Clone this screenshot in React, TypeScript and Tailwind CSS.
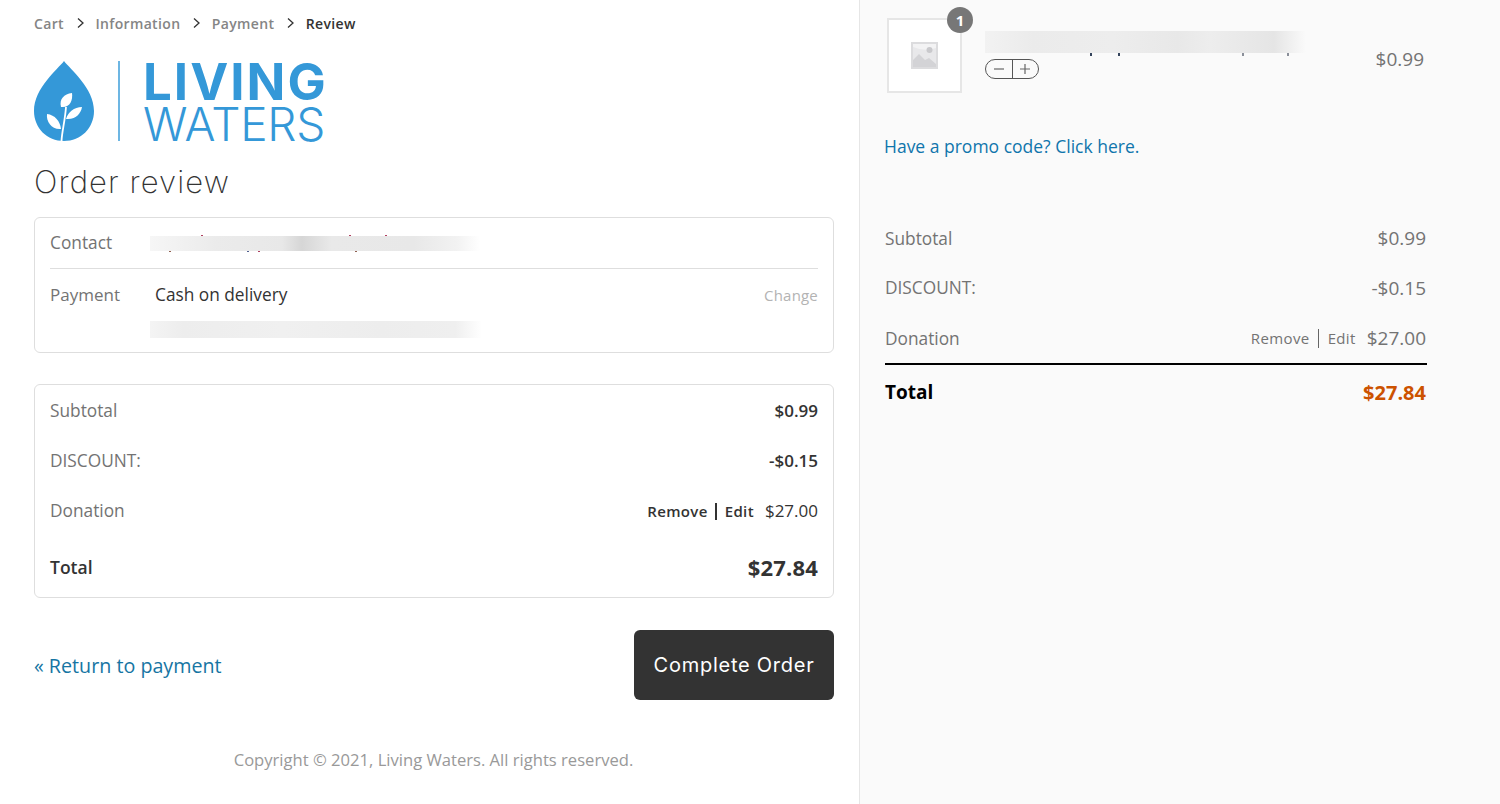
import React from "react";

const sans = "font-['Open_Sans',sans-serif]";

function Chevron() {
  return (
    <svg width="9" height="12" viewBox="0 0 9 12" fill="none" stroke="#333" strokeWidth="1.3" className="ml-[12px] mr-[10.4px]">
      <path d="M2 1.5 L7 6 L2 10.5" />
    </svg>
  );
}

function Logo() {
  return (
    <div className="flex items-stretch h-[80px] mt-[28px]">
      <svg width="61" height="80" viewBox="0 0 61 80">
        <path d="M30 0 C24 8 0 27 0 50 C0 67 13 80 30 80 C47 80 60 67 60 50 C60 27 36 8 30 0Z" fill="#3498d8" />
        <path d="M27.5 80 C28 70 31 60 32 46" stroke="#fff" strokeWidth="1.8" fill="none" />
        <path d="M27 46 C25 38 30 33 38 32 C39 39 36 46 29 46Z" fill="#fff" />
        <path d="M32 58 C34 51 40 46 48 46 C47 52 42 59 32 58Z" fill="#fff" />
        <path d="M27 68 C26 60 21 54 13 53 C12 61 18 69 27 68Z" fill="#fff" />
      </svg>
      <div className="w-[2px] bg-[#6db6e3] ml-[23px] mr-[23px]" />
      <div className="flex flex-col justify-between pt-[2px] font-['Inter',sans-serif] text-[#3498d8]">
        <span className="text-[51px] font-bold h-[37px] leading-[37px] tracking-[2px]">LIVING</span>
        <span className="text-[46px] font-light h-[33px] leading-[33px] tracking-[-0.3px]">WATERS</span>
      </div>
    </div>
  );
}

function Ticks({ items, tall }: { items: [number, number, string][]; tall?: boolean }) {
  return (
    <>
      {items.map(([x, y, c], i) => (
        <span key={i} className={tall ? "absolute w-[2px] h-[3px]" : "absolute w-[2px] h-[1px]"} style={{ left: x, top: y, backgroundColor: c }} />
      ))}
    </>
  );
}

function SummaryRow({ label, value, h }: { label: string; value: React.ReactNode; h: string }) {
  return (
    <div className={`flex items-center justify-between ${h}`}>
      <span className="text-[17.3px] text-[#737373]">{label}</span>
      <span className="text-[17px] text-[#333] font-semibold">{value}</span>
    </div>
  );
}

export default function App() {
  return (
    <div className={`flex min-h-[804px] h-[804px] overflow-hidden bg-white ${sans}`}>
      {/* Left */}
      <main className="w-[860px] shrink-0 border-r border-[#e6e6e6] pl-[34px] pr-[25px] pt-[13px]">
        <nav className="flex items-center h-[20px] text-[14px] font-semibold tracking-[0.35px] text-[#858585]">
          <span>Cart</span>
          <Chevron />
          <span>Information</span>
          <Chevron />
          <span>Payment</span>
          <Chevron />
          <span className="text-[#333]">Review</span>
        </nav>

        <Logo />

        <h1 className="font-['Inter',sans-serif] font-extralight text-[31px] leading-[40px] tracking-[1.1px] text-[#333] mt-[21px]">Order review</h1>

        <section className="mt-[15px] h-[136px] border border-[#dedede] rounded-[6px] px-[15px]">
          <div className="flex items-center h-[51px] border-b border-[#dedede]">
            <span className="w-[100px] text-[17.3px] text-[#737373]">Contact</span>
            <div className="relative w-[330px] h-[15px] bg-[linear-gradient(90deg,#f6f6f6_0%,#ebebeb_20%,#e8e8e8_40%,#d6d6d6_46%,#e9e9e9_55%,#e8e8e8_80%,#f2f2f2_93%,#ffffff_100%)]">
              <Ticks
                items={[
                  [51, -1, "#b04060"],
                  [199, -1, "#b04060"],
                  [235, -1, "#b04060"],
                  [19, 15, "#906050"],
                  [97, 15, "#506090"],
                  [108, 15, "#b04060"],
                  [205, 15, "#906050"],
                ]}
              />
            </div>
          </div>
          <div className="flex items-center h-[51px]">
            <span className="w-[105px] text-[17px] text-[#737373]">Payment</span>
            <span className="text-[17.3px] text-[#333] grow">Cash on delivery</span>
            <span className="text-[15px] text-[#b3b3b3] tracking-[0.2px] mt-[2px]">Change</span>
          </div>
          <div className="mt-[1px] ml-[100px] w-[332px] h-[17px] bg-[linear-gradient(90deg,#f4f4f4_0%,#ededed_10%,#f0f0f0_40%,#ededed_70%,#efefef_92%,#ffffff_100%)]" />
        </section>

        <section className="mt-[31px] h-[214px] border border-[#dedede] rounded-[6px] px-[15px] pt-[1px]">
          <SummaryRow h="h-[50px]" label="Subtotal" value="$0.99" />
          <SummaryRow h="h-[50px]" label="DISCOUNT:" value="-$0.15" />
          <SummaryRow
            h="h-[50px]"
            label="Donation"
            value={
              <span className="flex items-center">
                <span className="text-[15px] tracking-[0.35px]">Remove</span>
                <span className="w-[2px] h-[17px] bg-[#333] ml-[7px] mr-[8px]" />
                <span className="text-[15px] tracking-[0.35px] mr-[11px]">Edit</span>
                <span className="font-normal">$27.00</span>
              </span>
            }
          />
          <div className="flex items-center justify-between h-[62px] text-[#333]">
            <span className="text-[17.5px] font-semibold">Total</span>
            <span className="text-[22px] font-bold tracking-[0.2px]">$27.84</span>
          </div>
        </section>

        <div className="flex items-center justify-between mt-[32px]">
          <a className="text-[19.7px] text-[#1675a3] mt-[2px]">« Return to payment</a>
          <button className="w-[200px] h-[70px] rounded-[6px] bg-[#333] text-white font-['Inter',sans-serif] text-[20px] tracking-[0.75px]">Complete Order</button>
        </div>

        <p className="mt-[48px] text-center text-[16.6px] leading-[24px] text-[#999] pr-[1px]">Copyright © 2021, Living Waters. All rights reserved.</p>
      </main>

      {/* Right */}
      <aside className="grow bg-[#fafafa] pl-[25px] pr-[74px] pt-[18px]">
        <div className="flex items-center h-[75px]">
          <div className="relative w-[75px] h-[75px] ml-[2px] shrink-0 bg-white border-2 border-[#e6e6e6] flex items-center justify-center">
            <svg width="27" height="27" viewBox="0 0 27 27">
              <rect width="27" height="27" fill="#dcdcde" />
              <rect x="2" y="2" width="23" height="23" fill="#e8e8ea" />
              <path d="M2 2 H25 V6 Q14 10 2 5Z" fill="#f3f3f4" />
              <circle cx="18.5" cy="8" r="3" fill="#c9c9cc" />
              <path d="M2 25 V18 L8 12 L14 18 L18 16 L25 22 V25Z" fill="#d3d3d6" />
            </svg>
            <span className="absolute -top-[13px] -right-[13px] w-[26px] h-[26px] rounded-full bg-[#777] text-white text-[15px] font-bold flex items-center justify-center">1</span>
          </div>
          <div className="ml-[23px] w-[321px] -mt-[2px]">
            <div className="relative h-[22px] mb-[6px] bg-[linear-gradient(90deg,#f2f2f2_0%,#ebebeb_15%,#ededed_40%,#e8e8e8_60%,#ededed_70%,#e5e5e5_90%,#fafafa_100%)]">
              <Ticks
                tall
                items={[
                  [105, 22, "#34445c"],
                  [133, 22, "#34445c"],
                  [257, 22, "#8a8f99"],
                  [302, 22, "#8a8f99"],
                ]}
              />
            </div>
            <div className="flex items-center w-[54px] h-[20px] border border-[#555] rounded-full">
              <span className="flex-1 flex items-center justify-center text-[#666]">
                <svg width="12" height="12" viewBox="0 0 12 12" stroke="#666" strokeWidth="1.2"><path d="M1 6H11" /></svg>
              </span>
              <span className="w-[1px] h-full bg-[#555]" />
              <span className="flex-1 flex items-center justify-center">
                <svg width="12" height="12" viewBox="0 0 12 12" stroke="#666" strokeWidth="1.2"><path d="M1 6H11M6 1V11" /></svg>
              </span>
            </div>
          </div>
          <span className="ml-auto mr-[2px] mt-[8px] text-[19px] text-[#737373]">$0.99</span>
        </div>

        <a className="block mt-[40px] -ml-[1px] text-[17.5px] leading-[26px] text-[#0f75ac]">Have a promo code? Click here.</a>

        <div className="mt-[54px] text-[#737373]">
          <div className="flex items-center justify-between h-[50px]">
            <span className="text-[17.3px] mt-[1px]">Subtotal</span>
            <span className="text-[19px]">$0.99</span>
          </div>
          <div className="flex items-center justify-between h-[50px]">
            <span className="text-[17.3px] -mt-[1px]">DISCOUNT:</span>
            <span className="text-[19px] mt-[1px]">-$0.15</span>
          </div>
          <div className="flex items-center justify-between h-[50px]">
            <span className="text-[17.3px] mt-[1px]">Donation</span>
            <span className="flex items-center mt-[1px]">
              <span className="text-[15px] tracking-[0.4px]">Remove</span>
              <span className="w-[1px] h-[19px] bg-[#666] ml-[8px] mr-[9px]" />
              <span className="text-[15px] tracking-[0.35px] mr-[11px]">Edit</span>
              <span className="text-[19px]">$27.00</span>
            </span>
          </div>
        </div>
        <div className="flex items-center justify-between h-[57px] border-t-2 border-black -mr-[1px] pr-[1px]">
          <span className="text-[19px] font-bold text-black">Total</span>
          <span className="text-[20px] font-bold text-[#cc5200]">$27.84</span>
        </div>
      </aside>
    </div>
  );
}
